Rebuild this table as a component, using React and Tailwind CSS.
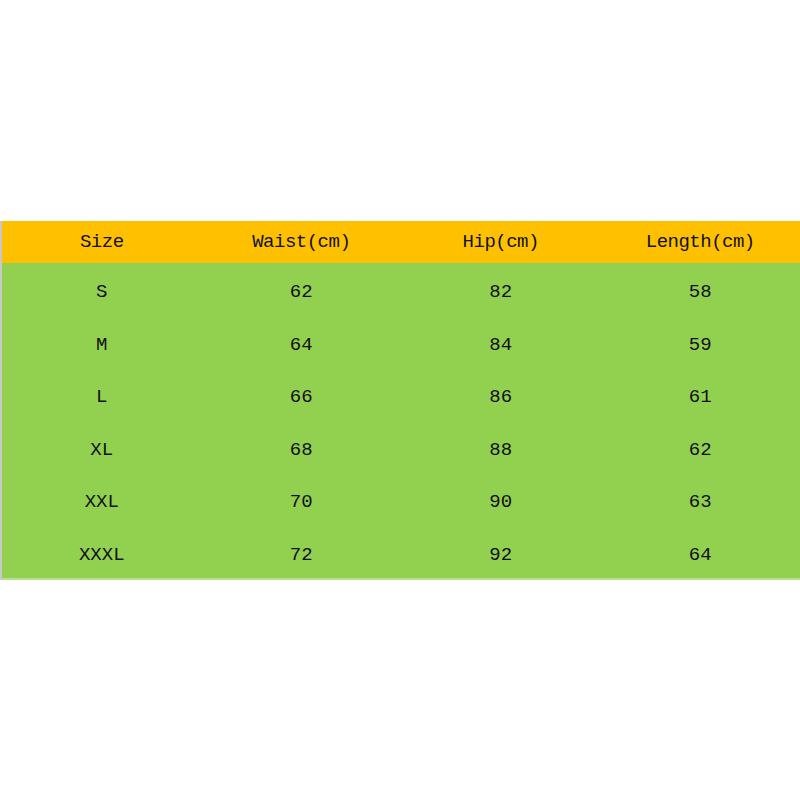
import React from 'react'

const headers = ['Size', 'Waist(cm)', 'Hip(cm)', 'Length(cm)']
const rows = [
  ['S', '62', '82', '58'],
  ['M', '64', '84', '59'],
  ['L', '66', '86', '61'],
  ['XL', '68', '88', '62'],
  ['XXL', '70', '90', '63'],
  ['XXXL', '72', '92', '64'],
]

export default function App() {
  return (
    <div className="w-[800px] h-[800px] bg-white flex flex-col" style={{ fontFamily: '"Liberation Mono", monospace' }}>
      <div className="h-[221px]" />
      <div className="border-l-2 border-[#c8c8c8]">
        <div className="grid grid-cols-4 h-[42px] bg-[#ffc000] items-center text-[19px] text-[#111111]">
          {headers.map((h) => (
            <div key={h} className="text-center tracking-[-0.5px]">{h}</div>
          ))}
        </div>
        <div className="bg-[#92d050] border-b-2 border-[#b7dd90]">
          {rows.map((r) => (
            <div key={r[0]} className="grid grid-cols-4 h-[52.5px] items-center pt-[6px] text-[19px] text-[#111111]">
              {r.map((c, i) => (
                <div key={i} className="text-center">{c}</div>
              ))}
            </div>
          ))}
        </div>
      </div>
    </div>
  )
}
